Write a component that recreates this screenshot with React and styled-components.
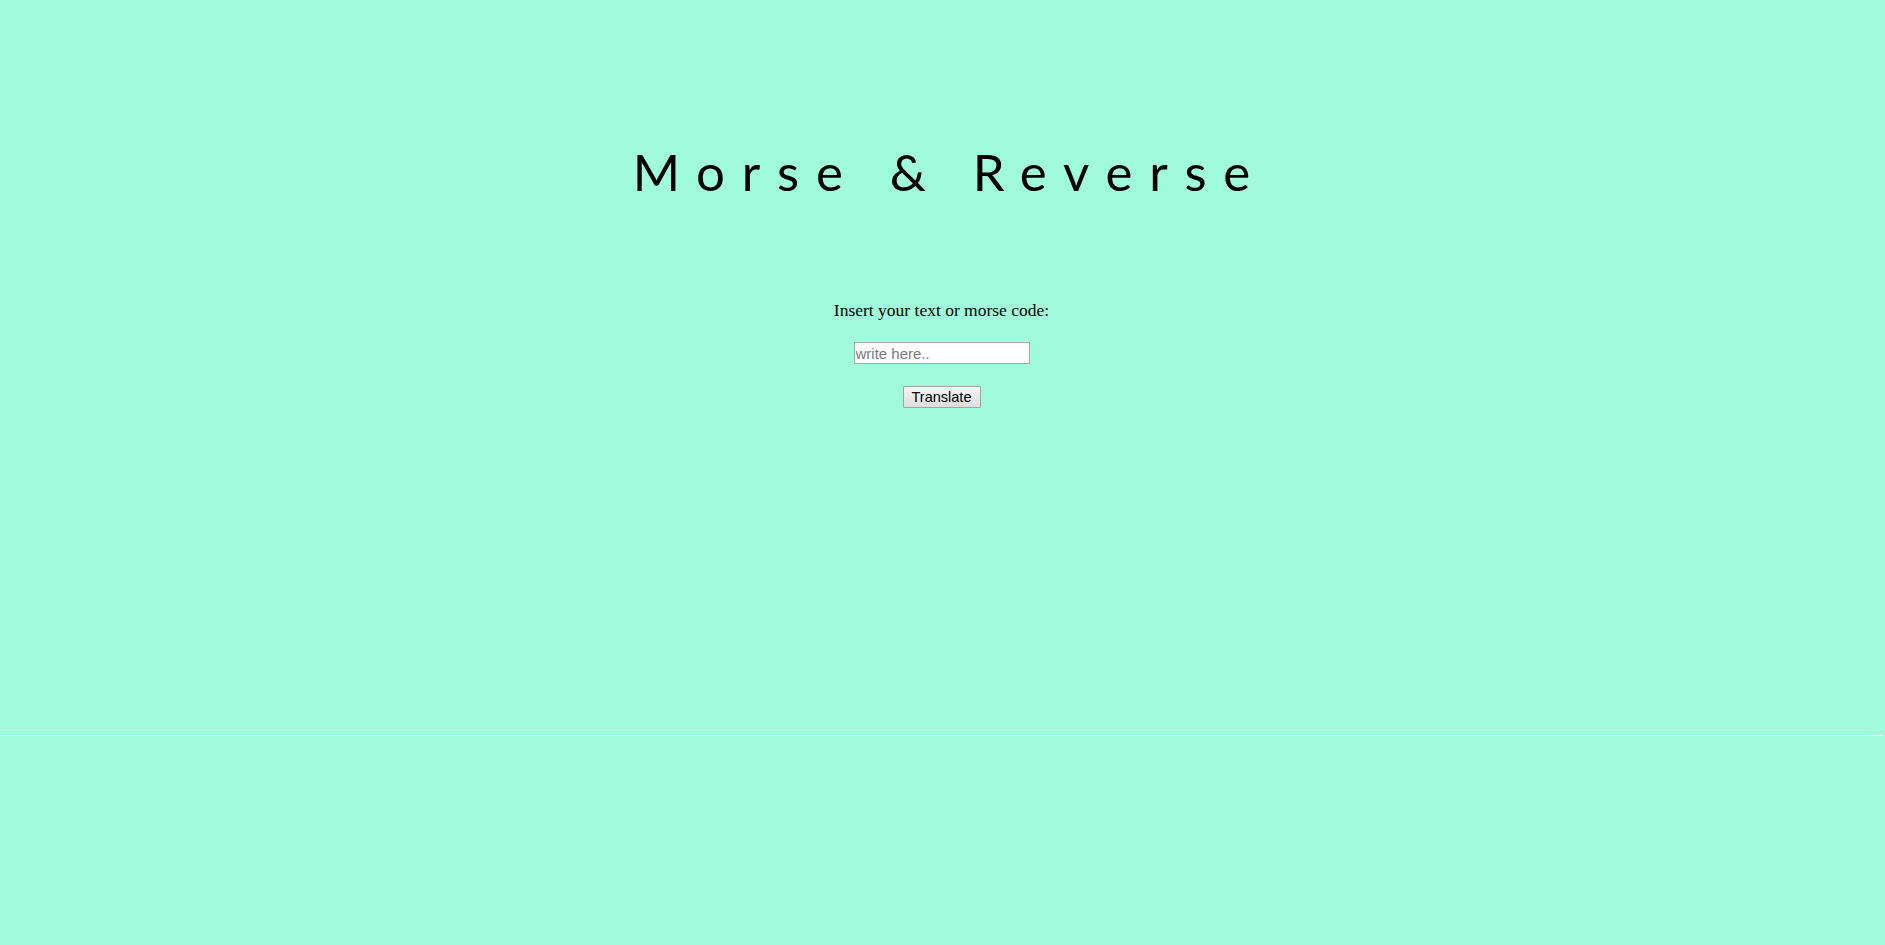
import React from 'react';
import styled, { createGlobalStyle } from 'styled-components';

const GlobalStyle = createGlobalStyle`
    html, body {
        margin: 0;
        padding: 0;
        background: #a0fbdc;
    }
`;

const Section = styled.div`
    width: calc(100% - 2px);
    height: 736px;
    border-bottom: 1px solid #ffffff;
    display: flex;
    flex-direction: column;
    align-items: center;
    box-sizing: border-box;
`;

const Title = styled.h1`
    font-family: 'Lato', 'Liberation Sans', sans-serif;
    font-weight: 400;
    font-size: 51px;
    line-height: 68px;
    letter-spacing: 0.33em;
    margin: 138px 0 0 0.33em;
    color: #000;
`;

const Form = styled.div`
    display: flex;
    flex-direction: column;
    align-items: center;
    margin-top: 94px;
`;

const Label = styled.p`
    font-family: 'Liberation Serif', 'Times New Roman', serif;
    font-size: 17.5px;
    line-height: 20px;
    margin: 0;
    color: #000;
`;

const TextInput = styled.input`
    width: 176px;
    height: 22px;
    box-sizing: border-box;
    margin-top: 22px;
    padding: 0 1px;
    border: 1px solid #a9a9a9;
    background: #fff;
    font-family: 'Liberation Sans', Arial, sans-serif;
    font-size: 15px;
    outline: none;

    &::placeholder {
        color: #7a7a7a;
    }
`;

const Button = styled.button`
    width: 78px;
    height: 22px;
    margin-top: 22px;
    padding: 0;
    box-sizing: border-box;
    border: 1px solid #a3a3a3;
    border-radius: 1px;
    background: linear-gradient(#f5f5f5, #dddddd);
    font-family: 'Liberation Sans', Arial, sans-serif;
    font-size: 14.5px;
    color: #000;
`;

function App() {
    return (
        <>
            <GlobalStyle />
            <Section>
                <Title>Morse &amp; Reverse</Title>
                <Form>
                    <Label>Insert your text or morse code:</Label>
                    <TextInput type="text" placeholder="write here.." />
                    <Button>Translate</Button>
                </Form>
            </Section>
        </>
    );
}

export default App;
